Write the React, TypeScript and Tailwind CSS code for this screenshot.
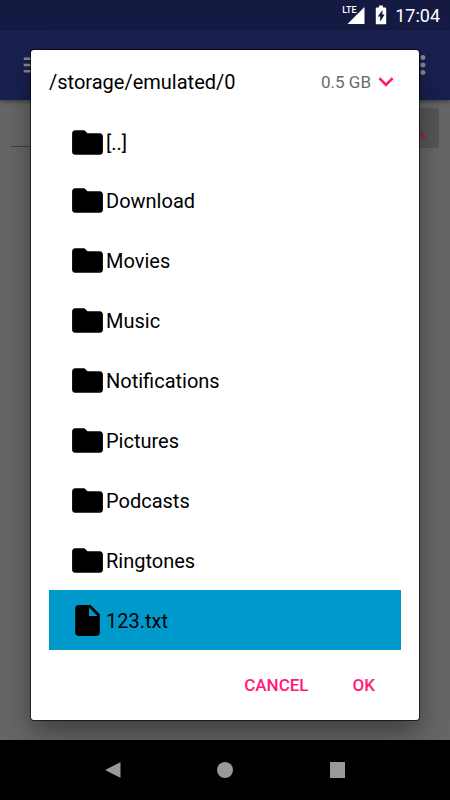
import { useState } from "react";

const folders = ["[..]", "Download", "Movies", "Music", "Notifications", "Pictures", "Podcasts", "Ringtones"];
const files = ["123.txt"];

const FOLDER_PATH = "M10 4H4c-1.1 0-1.99.9-1.99 2L2 18c0 1.1.9 2 2 2h16c1.1 0 2-.9 2-2V8c0-1.1-.9-2-2-2h-8l-2-2z";
const FILE_PATH = "M6 2c-1.1 0-1.99.9-1.99 2L4 20c0 1.1.89 2 1.99 2H18c1.1 0 2-.9 2-2V8l-6-6H6zm7 7V3.5L18.5 9H13z";

function StatusBar() {
  return (
    <header className="flex h-[30px] items-center justify-end bg-[#151a42] pr-[10px] text-white">
      <div className="relative h-[30px] w-6">
        <svg className="h-[30px] w-6" viewBox="0 0 24 30" fill="currentColor" aria-hidden="true">
          <path d="M22.500 7v17H5.500z" />
        </svg>
        <span className="absolute top-[5px] left-0 text-[9px] leading-[10px] font-medium">LTE</span>
      </div>
      <svg className="ml-[9px] h-[30px] w-3" viewBox="0 0 12 30" fill="currentColor" aria-hidden="true">
        <path fillRule="evenodd" d="M4 5.5h4v2h2.2q1 0 1 1v14.700q0 1-1 1H1.800q-1 0-1-1V8.500q0-1 1-1H4zM7.500 10L2.800 16.500h2.400v5.200l4.400-7.200H7.300z" />
      </svg>
      <span className="ml-2 pt-px text-lg leading-[30px]">17:04</span>
    </header>
  );
}

function AppBar() {
  return (
    <div className="z-0 flex h-[70px] items-center justify-between bg-[#192050] pr-3 pl-5 text-[#8a8a8a] shadow-[0_2px_4px_rgba(0,0,0,0.35)]">
      <button type="button" aria-label="Menu">
        <svg className="size-[30px]" viewBox="0 0 24 24" fill="currentColor">
          <path d="M3 18h18v-2H3v2zm0-5h18v-2H3v2zm0-7v2h18V6H3z" />
        </svg>
      </button>
      <button type="button" aria-label="More options">
        <svg className="size-[30px]" viewBox="0 0 24 24" fill="currentColor">
          <path d="M12 8c1.100 0 2-.9 2-2s-.9-2-2-2-2 .9-2 2 .9 2 2 2zm0 2c-1.100 0-2 .9-2 2s.9 2 2 2 2-.9 2-2-.9-2-2-2zm0 6c-1.100 0-2 .9-2 2s.9 2 2 2 2-.9 2-2-.9-2-2-2z" />
        </svg>
      </button>
    </div>
  );
}

function NavigationBar() {
  return (
    <nav className="grid h-[60px] grid-cols-8 items-center bg-black text-[#999999]">
      <button type="button" aria-label="Back" className="col-span-2 col-start-2 flex justify-center">
        <svg className="size-4" viewBox="0 0 16 16" fill="currentColor">
          <path d="M15.500.8v14.400q0 .8-.7.400L1 8.500Q.2 8 1 7.500L14.800.4q.7-.4.7.4z" />
        </svg>
      </button>
      <button type="button" aria-label="Home" className="col-span-2 flex justify-center">
        <span className="size-4 rounded-full bg-[#999999]" />
      </button>
      <button type="button" aria-label="Recent apps" className="col-span-2 flex justify-center">
        <span className="h-4 w-[15px] bg-[#999999]" />
      </button>
    </nav>
  );
}

function FileDialog() {
  const [selected, setSelected] = useState("123.txt");
  const row = "flex w-full items-center pl-5 text-left text-xl";
  return (
    <section
      role="dialog"
      aria-label="Choose a file"
      className="w-full rounded-[3px] bg-white px-[18px] text-black shadow-[0_0_0_1px_rgba(0,0,0,0.6),0_12px_28px_rgba(0,0,0,0.4)]"
    >
      <div className="flex h-16 items-center justify-between">
        <h1 className="text-xl">/storage/emulated/0</h1>
        <button type="button" className="flex items-center text-[17px] text-[#6b6b6b]">
          <span className="pt-px">0.5 GB</span>
          <svg className="size-[30px] text-[#ff1a79]" viewBox="0 0 24 24" fill="currentColor" aria-hidden="true">
            <path d="M7.410 8.290L12 12.870l4.590-4.580L18 9.700l-6 6-6-6z" />
          </svg>
        </button>
      </div>
      <ul>
        {[...folders, ...files].map((name, i) => (
          <li key={name}>
            <button
              type="button"
              onClick={() => setSelected(name)}
              className={`${row} ${i === 0 ? "h-14" : "h-[60px]"} ${selected === name ? "bg-[#0099cc]" : ""}`}
            >
              <svg className="size-[37px]" viewBox="0 0 24 24" fill="currentColor" aria-hidden="true">
                <path d={files.includes(name) ? FILE_PATH : FOLDER_PATH} />
              </svg>
              <span className="pt-px">{name}</span>
            </button>
          </li>
        ))}
      </ul>
      <div className="flex h-[70px] items-center justify-end gap-3 pt-px pr-[10px] text-[17px] font-medium text-[#ff1a79]">
        <button type="button" className="px-4 py-2">CANCEL</button>
        <button type="button" className="px-4 py-2">OK</button>
      </div>
    </section>
  );
}

export default function App() {
  return (
    <div className="relative flex min-h-screen flex-col bg-[#666666] font-[Roboto,sans-serif]">
      <StatusBar />
      <AppBar />
      <main className="flex flex-1 items-start gap-2 px-[11px] pt-2">
        <input
          type="text"
          aria-label="File path"
          className="h-[39px] min-w-0 flex-1 border-b border-[#404040] bg-transparent outline-none"
        />
        <button
          type="button"
          aria-label="Search"
          className="flex h-10 w-12 items-center justify-center rounded-[3px] bg-[#565656] text-[#a31a50]"
        >
          <svg className="size-[30px]" viewBox="0 0 24 24" fill="currentColor">
            <path d="M15.500 14h-.79l-.28-.27C15.410 12.590 16 11.110 16 9.500 16 5.910 13.090 3 9.500 3S3 5.910 3 9.500 5.910 16 9.500 16c1.610 0 3.090-.59 4.230-1.570l.27.28v.79l5 4.990L20.490 19l-4.990-5zm-6 0C7.010 14 5 11.990 5 9.500S7.010 5 9.500 5 14 7.010 14 9.500 11.990 14 9.500 14z" />
          </svg>
        </button>
      </main>
      <div className="absolute inset-x-0 top-[30px] bottom-[60px] flex items-center overflow-hidden px-[31px]">
        <FileDialog />
      </div>
      <NavigationBar />
    </div>
  );
}
